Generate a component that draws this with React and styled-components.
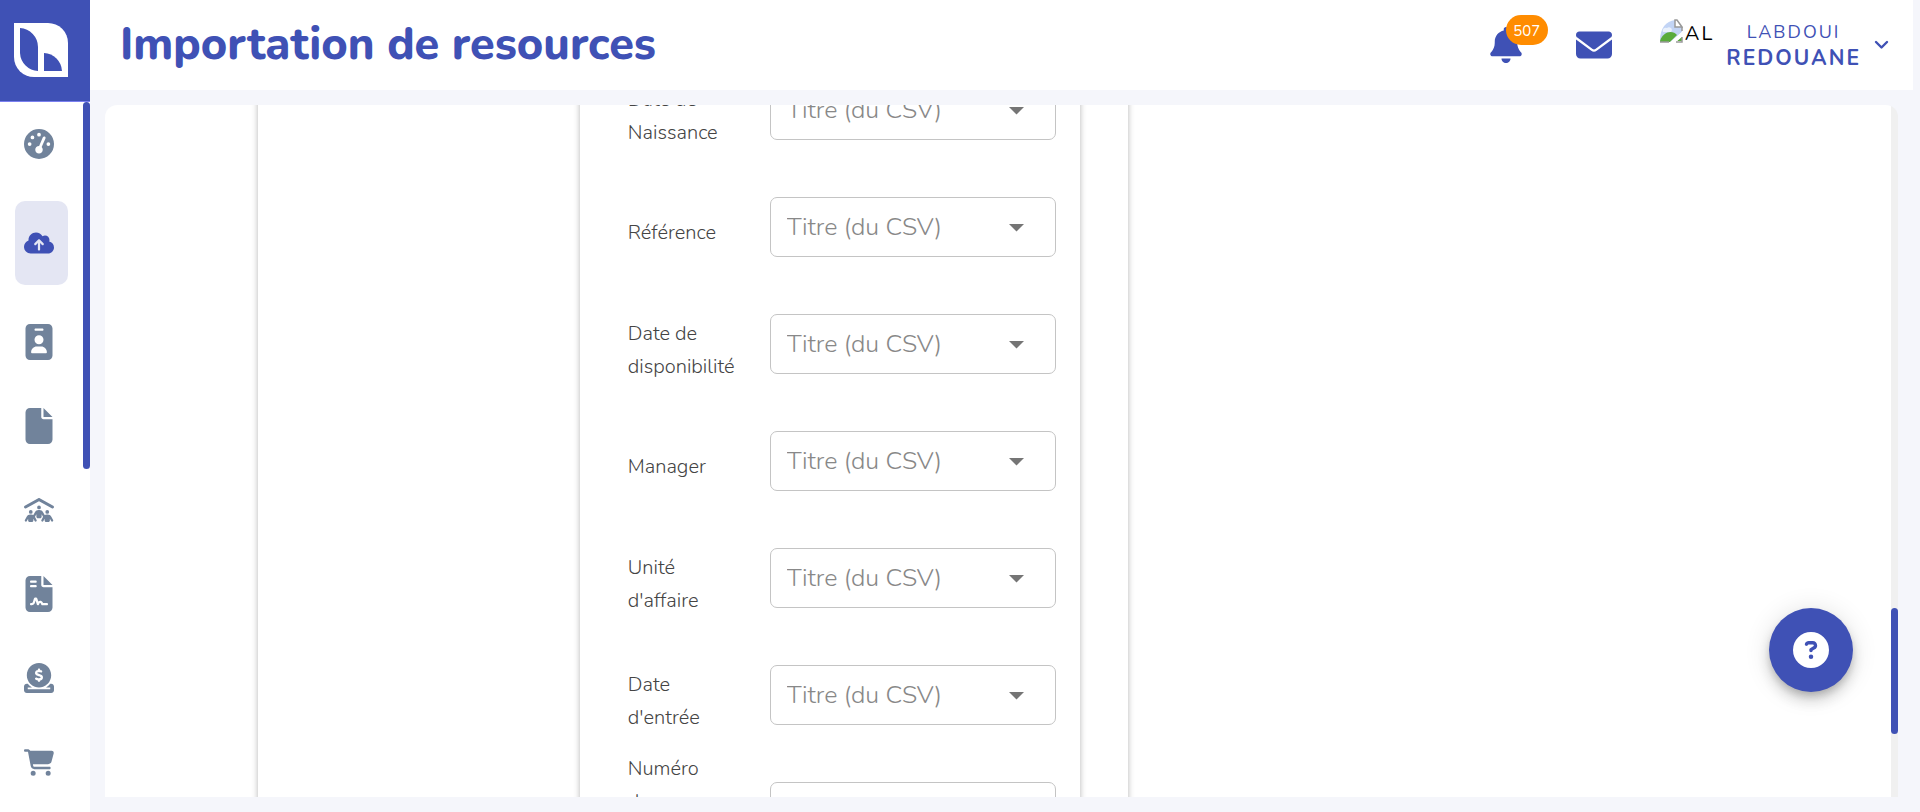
import React from "react";
import styled, { createGlobalStyle, css } from "styled-components";
import {
  FaGaugeHigh, FaCloudArrowUp, FaIdBadge, FaFile, FaPeopleRoof, FaFileContract,
  FaCircleDollarToSlot, FaCartShopping, FaBell, FaEnvelope, FaCircleQuestion,
} from "react-icons/fa6";

const indigo = "#3f51b5";

const GlobalStyle = createGlobalStyle`
  *, *::before, *::after { box-sizing: border-box; }
  body {
    margin: 0;
    background: #f5f6fb;
    font-family: Nunito, Lato, "Open Sans", sans-serif;
    overflow: hidden;
  }
  button, select { font: inherit; }
`;

const Shell = styled.div`
  display: flex;
  height: 100vh;
`;

const Sidebar = styled.aside`
  flex: 0 0 90px;
  display: flex;
  flex-direction: column;
  background: #fff;
`;

const LogoLink = styled.a`
  flex: 0 0 102px;
  display: flex;
  align-items: center;
  padding: 0 14px 1px;
  background: ${indigo};
  border-bottom: 1px solid #7a7ff0;
`;

const NavArea = styled.nav`
  position: relative;
  flex: 1;
  min-height: 0;
  overflow: hidden;
`;

const NavList = styled.ul`
  display: flex;
  flex-direction: column;
  margin: 0;
  padding: 0 22px 0 15px;
  list-style: none;
`;

const NavItem = styled.li`
  margin-bottom: ${(p) => (p.$spaced ? 15 : 0)}px;
`;

const NavLink = styled.a`
  display: flex;
  align-items: center;
  height: 84px;
  padding-left: 9px;
  border-radius: 10px;
  color: #71839b;
  ${(p) => p.$active && css`
    background: #e4e6f3;
    color: ${indigo};
  `}
  svg {
    width: 30px;
    height: ${(p) => p.$iconHeight}px;
  }
`;

const Thumb = styled.div`
  position: absolute;
  right: 0;
  top: ${(p) => p.$top};
  width: 7px;
  height: ${(p) => p.$height};
  border-radius: 4px;
  background: ${indigo};
`;

const Main = styled.div`
  flex: 1;
  min-width: 0;
  display: flex;
  flex-direction: column;
`;

const Header = styled.header`
  flex: 0 0 90px;
  display: flex;
  align-items: center;
  justify-content: space-between;
  margin-right: 7px;
  padding: 0 24px 0 30px;
  background: #fff;
`;

const Title = styled.h1`
  margin: 0;
  font-size: 45px;
  line-height: 60px;
  font-weight: 800;
  color: ${indigo};
`;

const Tools = styled.div`
  display: flex;
  align-items: center;
`;

const ToolButton = styled.button`
  position: relative;
  display: flex;
  margin: 0 ${(p) => p.$gap}px 0 0;
  padding: 0;
  border: 0;
  background: none;
  color: ${indigo};
  svg { height: 36px; width: auto; }
`;

const Count = styled.span`
  position: absolute;
  left: 18px;
  top: -12px;
  width: 42px;
  height: 30px;
  border-radius: 15px;
  background: #ff8c00;
  color: #fff;
  font-size: 15px;
  line-height: 32px;
  text-align: center;
`;

const Account = styled.button`
  display: flex;
  align-items: center;
  padding: 0;
  border: 0;
  background: none;
  color: ${indigo};
  letter-spacing: 2px;
`;

const Avatar = styled.span`
  display: flex;
  align-items: flex-start;
  align-self: flex-start;
  gap: 2px;
  margin-right: 12px;
  color: #000;
  font-size: 20px;
  line-height: 30px;
`;

const UserName = styled.span`
  display: flex;
  flex-direction: column;
  align-items: center;
  margin-right: 13px;
  font-size: 18px;
  line-height: 26px;
  strong { font-size: 21px; font-weight: 700; }
`;

const Card = styled.main`
  position: relative;
  flex: 1;
  min-height: 0;
  margin: 15px 22px 15px 15px;
  padding-right: 7px;
  border-radius: 12px 12px 0 0;
  background: linear-gradient(#f0f0f0, #f0f0f0) right / 7px 100% no-repeat #fff;
  overflow: hidden;
`;

const Step = styled.section`
  display: flex;
  justify-content: flex-end;
  width: 48.7%;
  margin: -54px 0 0 153px;
  padding-right: 48px;
  box-shadow: 0 0 6px rgba(0, 0, 0, 0.3);
`;

const Mapping = styled.form`
  width: 500px;
  padding: 0 24px 0 48px;
  box-shadow: 0 0 6px rgba(0, 0, 0, 0.3);
`;

const Field = styled.div`
  display: grid;
  grid-template-columns: 92px 286px;
  grid-template-rows: 117px;
  justify-content: space-between;
  align-items: center;
`;

const Label = styled.label`
  padding-top: 12px;
  font-size: 20px;
  font-weight: 300;
  line-height: 33px;
  color: #444;
`;

const SelectBox = styled.div`
  display: grid;
  align-items: center;
  > * { grid-area: 1 / 1; }
  svg {
    justify-self: end;
    margin: 2px 32px 0 0;
    fill: #757575;
    pointer-events: none;
  }
`;

const Select = styled.select`
  appearance: none;
  width: 100%;
  height: 60px;
  padding: 0 16px;
  border: 1px solid #c4c4c4;
  border-radius: 7px;
  background: #fff;
  color: #888;
  font-size: 25px;
  font-weight: 300;
`;

const HelpButton = styled.button`
  position: fixed;
  right: 67px;
  bottom: 120px;
  display: flex;
  align-items: center;
  justify-content: center;
  width: 84px;
  height: 84px;
  border: 0;
  border-radius: 50%;
  background: ${indigo};
  color: #fff;
  box-shadow: 0 5px 8px -2px rgba(0, 0, 0, 0.2), 0 9px 15px rgba(0, 0, 0, 0.14), 0 2px 27px rgba(0, 0, 0, 0.12);
  svg { width: 36px; height: 36px; }
`;

const Logo = () => (
  <svg width="54" height="54" viewBox="0 0 54 54" aria-hidden="true">
    <path fill="#fff" d="M0 0H34A20 20 0 0 1 54 20V54H20A20 20 0 0 1 0 34Z" />
    <path fill={indigo} d="M6 5A19 19 0 0 1 24 24V48A19 19 0 0 1 6 30Z" />
    <path fill={indigo} d="M30 30A19 19 0 0 1 48 48H30Z" />
  </svg>
);

const Chevron = () => (
  <svg width="15" height="10" viewBox="0 0 15 10" aria-hidden="true">
    <path fill="none" stroke={indigo} strokeWidth="2.4" strokeLinecap="round" strokeLinejoin="round" d="M2 2 7.5 7.5 13 2" />
  </svg>
);

const BrokenImage = () => (
  <svg width="24" height="24" viewBox="0 0 24 24" aria-hidden="true">
    <path fill="#c2d4f5" d="M1 22C1 9 7 2 16 1V7H23V13L12 23H1Z" />
    <path fill="#eaf1fc" d="M4 13a3 3 0 0 1 4-4 3 3 0 0 1 5 2l-1 2Z" />
    <path fill="#59ab3c" d="M1 22C4 12 14 11 18 16L11 23H1Z" />
    <path fill="#59ab3c" d="M18 22 23 18V22Z" />
    <path fill="#fff" d="M10 24 24 12V16L16 24Z" />
    <path fill="none" stroke="#999" strokeWidth="1.5" d="M1 23H10M17 23H23V18M23 12V8" />
    <path fill="#fff" stroke="#999" strokeWidth="1.5" d="M16 1V8H23L18 1Z" />
  </svg>
);

const links = [
  { name: "Tableau de bord", Icon: FaGaugeHigh, h: 30, spaced: true },
  { name: "Importation", Icon: FaCloudArrowUp, h: 24, spaced: true, active: true },
  { name: "Ressources", Icon: FaIdBadge, h: 36 },
  { name: "Documents", Icon: FaFile, h: 36 },
  { name: "Équipes", Icon: FaPeopleRoof, h: 24 },
  { name: "Contrats", Icon: FaFileContract, h: 36 },
  { name: "Paiements", Icon: FaCircleDollarToSlot, h: 30 },
  { name: "Achats", Icon: FaCartShopping, h: 27 },
];

const fields = [
  "Date de Naissance", "Référence", "Date de disponibilité", "Manager",
  "Unité d'affaire", "Date d'entrée", "Numéro de sécurité sociale",
];

export default function App() {
  return (
    <Shell>
      <GlobalStyle />
      <Sidebar>
        <LogoLink href="#" aria-label="Accueil"><Logo /></LogoLink>
        <NavArea>
          <NavList>
            {links.map(({ name, Icon, h, spaced, active }) => (
              <NavItem key={name} $spaced={spaced}>
                <NavLink href="#" aria-label={name} $active={active} $iconHeight={h}><Icon /></NavLink>
              </NavItem>
            ))}
          </NavList>
          <Thumb $top="0" $height="51.7%" />
        </NavArea>
      </Sidebar>
      <Main>
        <Header>
          <Title>Importation de resources</Title>
          <Tools>
            <ToolButton $gap={52} aria-label="Notifications"><FaBell /><Count>507</Count></ToolButton>
            <ToolButton $gap={47} aria-label="Messages"><FaEnvelope /></ToolButton>
            <Account>
              <Avatar><BrokenImage />AL</Avatar>
              <UserName>LABDOUI<strong>REDOUANE</strong></UserName>
              <Chevron />
            </Account>
          </Tools>
        </Header>
        <Card>
          <Step>
            <Mapping>
              {fields.map((name, i) => (
                <Field key={name}>
                  <Label htmlFor={`field-${i}`}>{name}</Label>
                  <SelectBox>
                    <Select id={`field-${i}`}><option>Titre (du CSV)</option></Select>
                    <svg width="15" height="8" viewBox="0 0 15 8" aria-hidden="true"><path d="M0 0H15L7.5 7.5Z" /></svg>
                  </SelectBox>
                </Field>
              ))}
            </Mapping>
          </Step>
          <Thumb $top="72.7%" $height="18.2%" />
        </Card>
      </Main>
      <HelpButton aria-label="Aide"><FaCircleQuestion /></HelpButton>
    </Shell>
  );
}
